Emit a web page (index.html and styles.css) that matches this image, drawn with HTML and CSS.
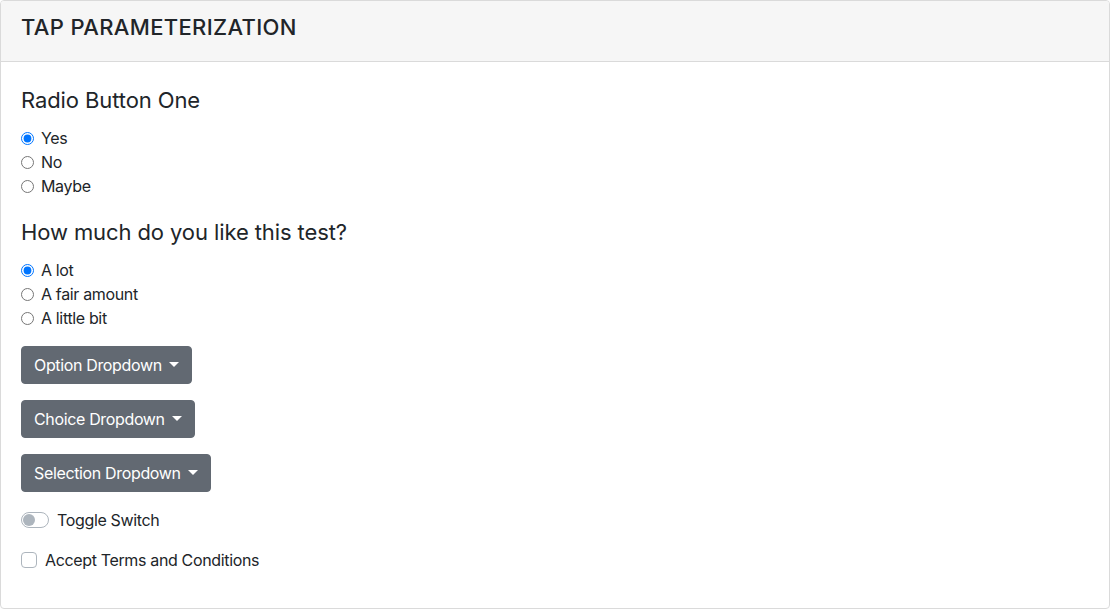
FILE: index.html
```html
<!DOCTYPE html>
<html lang="en">
<head>
<meta charset="utf-8">
<title>TAP Parameterization</title>
<link rel="stylesheet" href="styles.css">
</head>
<body>
<div class="card">
  <div class="card-header">
    <h4 class="card-title">TAP PARAMETERIZATION</h4>
  </div>
  <div class="card-body">
    <div class="group group-first">
      <h5 class="group-title">Radio Button One</h5>
      <label class="radio-row"><input type="radio" name="r1" checked><span>Yes</span></label>
      <label class="radio-row"><input type="radio" name="r1"><span>No</span></label>
      <label class="radio-row"><input type="radio" name="r1"><span>Maybe</span></label>
    </div>
    <div class="group">
      <h5 class="group-title">How much do you like this test?</h5>
      <label class="radio-row"><input type="radio" name="r2" checked><span>A lot</span></label>
      <label class="radio-row"><input type="radio" name="r2"><span>A fair amount</span></label>
      <label class="radio-row"><input type="radio" name="r2"><span>A little bit</span></label>
    </div>
    <div class="dropdown"><button class="btn btn-secondary dropdown-toggle" type="button">Option Dropdown</button></div>
    <div class="dropdown"><button class="btn btn-secondary dropdown-toggle" type="button">Choice Dropdown</button></div>
    <div class="dropdown"><button class="btn btn-secondary dropdown-toggle" type="button">Selection Dropdown</button></div>
    <label class="switch-row"><span class="switch-track"><span class="switch-knob"></span></span><span>Toggle Switch</span></label>
    <label class="check-row"><span class="check-box"></span><span>Accept Terms and Conditions</span></label>
  </div>
</div>
</body>
</html>
```
FILE: styles.css
```css
* { box-sizing: border-box; }
html, body {
  margin: 0;
  padding: 0;
  background: #fff;
}
body {
  font-family: Inter, "Liberation Sans", Arial, sans-serif;
  font-size: 16px;
  line-height: 24px;
  letter-spacing: -0.35px;
  color: #212529;
}
.card {
  width: 1110px;
  height: 609px;
  border: 1px solid #dadada;
  border-radius: 4px;
  overflow: hidden;
  display: flex;
  flex-direction: column;
}
.card-header {
  background: #f6f6f6;
  border-bottom: 1px solid #dadada;
  padding: 12px 20px 20px;
}
.card-title {
  margin: 0;
  font-size: 22px;
  line-height: 28px;
  font-weight: 500;
  letter-spacing: 0.35px;
  color: #212529;
}
.card-body {
  padding: 25px 20px 20px;
  display: flex;
  flex-direction: column;
  align-items: flex-start;
}
.group {
  display: flex;
  flex-direction: column;
  margin-bottom: 16px;
}
.group-first { margin-bottom: 21px; }
.group-title {
  margin: 0 0 12px;
  font-size: 22px;
  line-height: 27px;
  font-weight: 400;
  letter-spacing: -0.1px;
}
.radio-row {
  display: flex;
  align-items: center;
  height: 24px;
}
.radio-row input {
  width: 13px;
  height: 13px;
  margin: 0 7px 0 0;
}
.dropdown { margin-bottom: 16px; }
.btn {
  font-family: inherit;
  font-size: 16px;
  line-height: 24px;
  letter-spacing: -0.35px;
  padding: 6px 12px;
  border: 1px solid #626972;
  border-radius: 4px;
  background: #626972;
  color: #fff;
  cursor: pointer;
}
.dropdown-toggle::after {
  content: "";
  display: inline-block;
  margin-left: 7px;
  vertical-align: 4px;
  border-top: 5px solid #fff;
  border-right: 5px solid transparent;
  border-left: 5px solid transparent;
}
.switch-row {
  display: flex;
  align-items: center;
  height: 24px;
  margin-bottom: 16px;
}
.switch-track {
  width: 28px;
  height: 16px;
  border: 1px solid #adb5bd;
  border-radius: 8px;
  background: #fff;
  margin-right: 8px;
  position: relative;
}
.switch-knob {
  position: absolute;
  top: 1px;
  left: 1px;
  width: 12px;
  height: 12px;
  border-radius: 50%;
  background: #adb5bd;
}
.check-row {
  display: flex;
  align-items: center;
  height: 24px;
}
.check-box {
  width: 16px;
  height: 16px;
  border: 1px solid #adb5bd;
  border-radius: 4px;
  background: #fff;
  margin-right: 8px;
}
```
